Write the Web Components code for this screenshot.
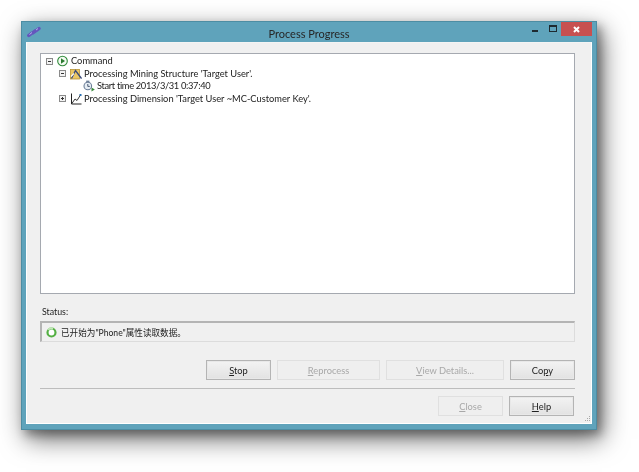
<!DOCTYPE html>
<html>
<head>
<meta charset="utf-8">
<title>Process Progress</title>
<style>
  html, body { margin: 0; background: #fff; }
  body { font-family: Lato, "Noto Sans CJK SC", sans-serif; height: 472px; overflow: hidden; }
</style>
</head>
<body>
<win-dialog>
  <span slot="title">Process Progress</span>
  <tree-view>
    <tree-row level="0" expander="minus" icon="run">Command</tree-row>
    <tree-row level="1" expander="minus" icon="mining">Processing Mining Structure 'Target User'.</tree-row>
    <tree-row level="2" icon="clock" tight>Start time 2013/3/31 0:37:40</tree-row>
    <tree-row level="1" expander="plus" icon="dim">Processing Dimension 'Target User ~MC-Customer Key'.</tree-row>
  </tree-view>
  <status-box label="Status:">已开始为"Phone"属性读取数据。</status-box>
  <button-row slot="actions">
    <dlg-button width="65" key="S" rest="top"></dlg-button>
    <dlg-button width="103" key="R" rest="eprocess" disabled></dlg-button>
    <dlg-button width="118" key="V" rest="iew Details..." disabled></dlg-button>
    <dlg-button width="65" pre="Co" key="p" rest="y"></dlg-button>
  </button-row>
  <button-row slot="footer">
    <dlg-button width="65" key="C" rest="lose" disabled></dlg-button>
    <dlg-button width="65" key="H" rest="elp"></dlg-button>
  </button-row>
</win-dialog>

<script>
class WinDialog extends HTMLElement {
  connectedCallback() {
    this.attachShadow({ mode: 'open' });
    this.shadowRoot.innerHTML = `
      <style>
        :host {
          display: flex;
          flex-direction: column;
          width: 576px;
          height: 409px;
          margin: 21px 0 42px 21px;
          box-sizing: border-box;
          background: #5fa3bb;
          border: 1px solid #4d8da3;
          box-shadow: 5px 9px 24px rgba(0,0,0,.58), 4px 5px 9px rgba(0,0,0,.3);
          color: #222;
        }
        header {
          display: grid;
          grid-template-columns: 1fr auto 1fr;
          align-items: center;
          height: 20px;
          flex: none;
        }
        .logo { width: 14px; height: 12px; margin-left: 5px; }
        .title {
          font-size: 11px;
          color: #262626;
          padding-top: 2px;
          filter: blur(.25px);
        }
        .caps { display: flex; justify-self: end; align-self: start; margin-right: 4px; }
        .cap { height: 14px; display: flex; align-items: center; justify-content: center; }
        .cap.min { width: 19px; }
        .cap.max { width: 17px; }
        .cap.close { width: 31px; background: #c75050; }
        main {
          flex: 1;
          position: relative;
          margin: 0 4px 5px;
          background: #f0f0f0;
          border: 1px solid #fff;
          border-top-color: #f4f4f4;
          padding: 10px 16px 0 13px;
          display: flex;
          flex-direction: column;
          min-height: 0;
          filter: blur(.3px);
        }
        hr {
          border: 0;
          height: 1px;
          margin: 8px 0 7px;
          background: #bdbdbd;
        }
        .grip { position: absolute; right: 0; bottom: 0; width: 7px; height: 7px; }
        ::slotted([slot=actions]) { margin-top: 18px; }
        ::slotted([slot=footer]) { margin-right: 1px; }
      </style>
      <header>
        <svg class="logo" viewBox="0 0 14 12">
          <path d="M1.8 9.5 L5 7 M5.5 7 L9 4.5 M9.5 4.5 L12 2.5" stroke="#6456bd" stroke-width="3.4" stroke-linecap="round" fill="none"/>
          <path d="M2.5 8.5 L5 6.5 M9 4 L11 2.5" stroke="#c0b9f0" stroke-width=".9" fill="none"/>
        </svg>
        <div class="title"><slot name="title"></slot></div>
        <div class="caps">
          <div class="cap min"><svg width="8" height="8" viewBox="0 0 8 8"><rect x="1" y="5" width="6" height="2" fill="#1e2a30"/></svg></div>
          <div class="cap max"><svg width="10" height="10" viewBox="0 0 10 10"><rect x="1.5" y="1.5" width="7" height="6" fill="none" stroke="#1e2a30"/><rect x="1" y="1" width="8" height="2" fill="#1e2a30"/></svg></div>
          <div class="cap close"><svg width="9" height="9" viewBox="0 0 9 9"><path d="M2 2 L7 7 M7 2 L2 7" stroke="#fff" stroke-width="2"/></svg></div>
        </div>
      </header>
      <main>
        <slot></slot>
        <slot name="actions"></slot>
        <hr>
        <slot name="footer"></slot>
        <svg class="grip" viewBox="0 0 7 7" fill="#a8a8a8">
          <rect x="5" y="0" width="1" height="1"/>
          <rect x="3" y="2" width="1" height="1"/><rect x="5" y="2" width="1" height="1"/>
          <rect x="1" y="4" width="1" height="1"/><rect x="3" y="4" width="1" height="1"/><rect x="5" y="4" width="1" height="1"/>
        </svg>
      </main>
    `;
  }
}
customElements.define('win-dialog', WinDialog);

class TreeView extends HTMLElement {
  connectedCallback() {
    this.attachShadow({ mode: 'open' });
    this.shadowRoot.innerHTML = `
      <style>
        :host {
          display: block;
          height: 241px;
          box-sizing: border-box;
          background: #fff;
          border: 1px solid #a5a9b0;
          padding: 1px 0 0 5px;
        }
      </style>
      <slot></slot>
    `;
  }
}
customElements.define('tree-view', TreeView);

const TREE_ICONS = {
  run: `<svg width="12" height="12" viewBox="0 0 12 12"><circle cx="5.5" cy="6" r="4.8" fill="#f4fbf2" stroke="#2f8a3a" stroke-width="1.1"/><path d="M4 3.2 L8 6 L4 8.8 Z" fill="#2a7a30"/></svg>`,
  mining: `<svg width="12" height="12" viewBox="0 0 12 12"><rect x="0.5" y="1.5" width="9" height="9.5" fill="#eac765" stroke="#b89436" stroke-width=".8"/><path d="M1.5 10.5 L5.5 2.5 L11.5 10.5" fill="none" stroke="#3a4a78" stroke-width="1.3"/><path d="M1 8.5 L4 5.5" stroke="#fff" stroke-width="1.1"/></svg>`,
  clock: `<svg width="12" height="12" viewBox="0 0 12 12"><circle cx="4.8" cy="6" r="3.8" fill="#e6edf4" stroke="#6d7f98" stroke-width="1.1"/><rect x="3.2" y="0.6" width="3.2" height="1.6" fill="#6d7f98"/><path d="M4.8 4 V6.4 H6.8" stroke="#4a5a72" fill="none"/><path d="M8.5 7.5 L11.8 9.6 L8.5 11.6 Z" fill="#3a8a3c"/></svg>`,
  dim: `<svg width="12" height="12" viewBox="0 0 12 12"><path d="M1.5 0.5 V11 H11.5" fill="none" stroke="#222" stroke-width="1"/><path d="M1.5 11 L5 6 L7 7.5 L10.5 2" fill="none" stroke="#222" stroke-width=".9"/><rect x="9.5" y="1" width="2" height="2" fill="#2a6fb0"/></svg>`
};

class TreeRow extends HTMLElement {
  connectedCallback() {
    const level = +this.getAttribute('level') || 0;
    const exp = this.getAttribute('expander');
    const icon = TREE_ICONS[this.getAttribute('icon')] || '';
    const plus = exp === 'plus' ? '<path d="M2 3.5 H5 M3.5 2 V5" stroke="#333" stroke-width="1"/>' : '<path d="M2 3.5 H5" stroke="#333" stroke-width="1"/>';
    const box = exp
      ? `<svg class="exp" width="7" height="7" viewBox="0 0 7 7"><rect x=".5" y=".5" width="6" height="6" fill="#f3f3f3" stroke="#8a8a8a"/>${plus}</svg>`
      : '<span class="exp"></span>';
    this.attachShadow({ mode: 'open' });
    this.shadowRoot.innerHTML = `
      <style>
        :host {
          display: flex;
          align-items: center;
          height: 12.5px;
          padding-left: ${level * 13}px;
          font-size: 9.3px;
          color: #222;
          white-space: nowrap;
        }
        :host([tight]) { letter-spacing: -.33px; }
        .exp { width: 7px; height: 7px; flex: none; margin-right: 4px; }
        .ico { display: flex; flex: none; margin-right: 2px; }
        .txt { position: relative; top: -.5px; }
      </style>
      ${box}<span class="ico">${icon}</span><span class="txt"><slot></slot></span>
    `;
  }
}
customElements.define('tree-row', TreeRow);

class StatusBox extends HTMLElement {
  connectedCallback() {
    const label = this.getAttribute('label') || '';
    this.attachShadow({ mode: 'open' });
    this.shadowRoot.innerHTML = `
      <style>
        :host { display: block; font-size: 8.8px; color: #222; }
        .label { margin-top: 12px; padding-left: 2px; height: 15px; line-height: 11px; }
        .box {
          height: 21px;
          box-sizing: border-box;
          display: flex;
          align-items: center;
          gap: 4px;
          padding-left: 4px;
          background: #f0f0f0;
          border: 1px solid #b4b4b4;
          border-right-color: #dcdcdc;
          border-bottom-color: #dcdcdc;
          border-left-width: 2px;
          border-top-width: 2px;
          font-size: 8.6px;
        }
        .spin { width: 11px; height: 11px; flex: none; }
      </style>
      <div class="label">${label}</div>
      <div class="box">
        <svg class="spin" viewBox="0 0 11 11">
          <circle cx="5.5" cy="5.5" r="4" fill="#fff" stroke="#55b044" stroke-width="2.2"/>
          <path d="M2.2 2.8 A4 4 0 0 1 7 1.8" fill="none" stroke="#c2e8b8" stroke-width="2"/>
        </svg>
        <slot></slot>
      </div>
    `;
  }
}
customElements.define('status-box', StatusBox);

class ButtonRow extends HTMLElement {
  connectedCallback() {
    this.attachShadow({ mode: 'open' });
    this.shadowRoot.innerHTML = `
      <style>
        :host { display: flex; justify-content: flex-end; gap: 6px; }
      </style>
      <slot></slot>
    `;
  }
}
customElements.define('button-row', ButtonRow);

class DlgButton extends HTMLElement {
  connectedCallback() {
    const off = this.hasAttribute('disabled');
    const w = this.getAttribute('width') || 65;
    const pre = this.getAttribute('pre') || '';
    const key = this.getAttribute('key') || '';
    const rest = this.getAttribute('rest') || '';
    this.attachShadow({ mode: 'open' });
    this.shadowRoot.innerHTML = `
      <style>
        :host {
          display: flex;
          align-items: center;
          justify-content: center;
          width: ${w}px;
          height: 20px;
          box-sizing: border-box;
          font-size: 9.3px;
          color: ${off ? '#a8a8a8' : '#222'};
          background: ${off ? '#efefef' : 'linear-gradient(#f3f3f3, #e2e2e2)'};
          border: ${off ? '1px solid #e0e0e0' : '1px solid #b4b4b4'};
          box-shadow: ${off ? 'none' : 'inset 0 0 0 1px #e8e8e8'};
        }
      </style>
      <span>${pre}<u>${key}</u>${rest}</span>
    `;
  }
}
customElements.define('dlg-button', DlgButton);
</script>
</body>
</html>
